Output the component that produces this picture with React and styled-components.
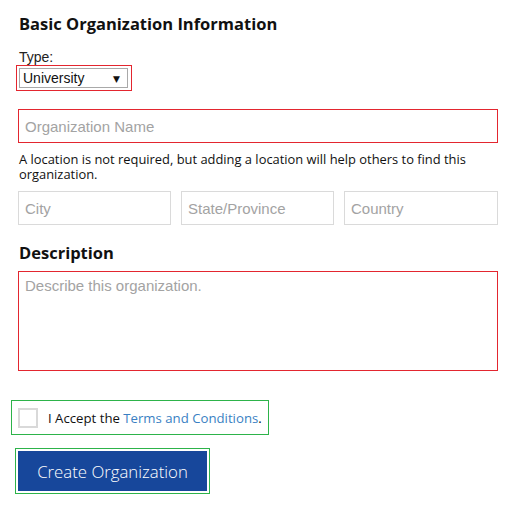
import React, { useState } from "react";
import styled, { createGlobalStyle } from "styled-components";

const GlobalStyle = createGlobalStyle`
  html, body {
    margin: 0;
    padding: 0;
    background: #ffffff;
  }
`;

const CreateOrganization = () => {
  const [type, setType] = useState("University");
  const [accepted, setAccepted] = useState(false);

  return (
    <>
      <GlobalStyle />
      <Page>
        <Heading>Basic Organization Information</Heading>

        <Label>Type:</Label>
        <SelectWrap>
          <Select value={type} onChange={(e) => setType(e.target.value)}>
            <option>University</option>
            <option>Company</option>
            <option>Non-Profit</option>
          </Select>
          <Arrow>▼</Arrow>
        </SelectWrap>

        <Field placeholder="Organization Name" invalid />

        <Hint>
          A location is not required, but adding a location will help others to
          find this organization.
        </Hint>

        <LocationRow>
          <Field placeholder="City" />
          <Field placeholder="State/Province" />
          <Field placeholder="Country" />
        </LocationRow>

        <SubHeading>Description</SubHeading>
        <TextArea placeholder="Describe this organization." />

        <AcceptRow>
          <CheckBox
            checked={accepted}
            onClick={() => setAccepted(!accepted)}
          />
          <AcceptText>
            I Accept the <TermsLink href="#">Terms and Conditions</TermsLink>.
          </AcceptText>
        </AcceptRow>

        <SubmitButton>Create Organization</SubmitButton>
      </Page>
    </>
  );
};

export default CreateOrganization;

const Page = styled.div`
  width: 480px;
  padding: 12px 0 20px 18px;
  display: flex;
  flex-direction: column;
  align-items: flex-start;
`;

const Heading = styled.h2`
  margin: 0 0 0 1px;
  font-family: "Open Sans", sans-serif;
  font-weight: 700;
  font-size: 16.5px;
  line-height: 24px;
  color: #111;
`;

const SubHeading = styled(Heading)`
  margin-top: 16px;
`;

const Label = styled.div`
  margin: 13px 0 0 1px;
  font-family: "Liberation Sans", Arial, sans-serif;
  font-size: 14px;
  line-height: 16px;
  color: #222;
`;

const SelectWrap = styled.div`
  position: relative;
  margin: 0 0 0 -2px;
  padding: 2px 3px 2px 2px;
  border: 1px solid #e3262f;
`;

const Select = styled.select`
  display: block;
  width: 109px;
  height: 20px;
  padding: 0 0 0 3px;
  border: 1px solid #a9a9a9;
  border-radius: 0;
  background: #fff;
  appearance: none;
  font-family: "Liberation Sans", Arial, sans-serif;
  font-size: 14px;
  color: #111;
`;

const Arrow = styled.span`
  position: absolute;
  right: 11px;
  top: 8px;
  font-family: "DejaVu Sans", sans-serif;
  font-size: 9px;
  line-height: 10px;
  color: #111;
  pointer-events: none;
`;

const Field = styled.input`
  box-sizing: border-box;
  width: ${(props) => (props.invalid ? "480px" : "100%")};
  height: 34px;
  margin-top: ${(props) => (props.invalid ? "18px" : "0")};
  padding: 0 6px;
  border: 1px solid ${(props) => (props.invalid ? "#e3262f" : "#dadada")};
  outline: none;
  font-family: "Liberation Sans", Arial, sans-serif;
  font-size: 15px;
  color: #333;
  &::placeholder {
    color: #a3a3a3;
  }
`;

const Hint = styled.p`
  margin: 9px 0 0 1px;
  font-family: "Open Sans", sans-serif;
  font-size: 12.9px;
  line-height: 15px;
  color: #111;
`;

const LocationRow = styled.div`
  margin-top: 9px;
  width: 480px;
  display: grid;
  grid-template-columns: 153px 153px 154px;
  column-gap: 10px;
`;

const TextArea = styled.textarea`
  box-sizing: border-box;
  width: 480px;
  height: 100px;
  margin-top: 6px;
  padding: 5px 6px;
  border: 1px solid #e3262f;
  outline: none;
  resize: none;
  font-family: "Liberation Sans", Arial, sans-serif;
  font-size: 15px;
  color: #333;
  &::placeholder {
    color: #a3a3a3;
  }
`;

const AcceptRow = styled.div`
  margin-top: 36px;
  height: 21px;
  display: flex;
  align-items: center;
  gap: 10px;
  outline: 1px solid #2db34a;
  outline-offset: 6px;
`;

const CheckBox = styled.span`
  box-sizing: border-box;
  width: 20px;
  height: 20px;
  border: 2px solid #d9d9d9;
  background: ${(props) => (props.checked ? "#d9d9d9" : "#fff")};
  cursor: pointer;
`;

const AcceptText = styled.span`
  font-family: "Open Sans", sans-serif;
  font-size: 13.2px;
  color: #111;
`;

const TermsLink = styled.a`
  color: #3a7fc3;
  text-decoration: none;
`;

const SubmitButton = styled.button`
  margin-top: 23px;
  width: 189px;
  height: 40px;
  border: none;
  background: #17479b;
  color: #fff;
  font-family: "Open Sans", sans-serif;
  font-weight: 300;
  font-size: 16.8px;
  outline: 1px solid #2db34a;
  outline-offset: 2px;
  cursor: pointer;
`;
